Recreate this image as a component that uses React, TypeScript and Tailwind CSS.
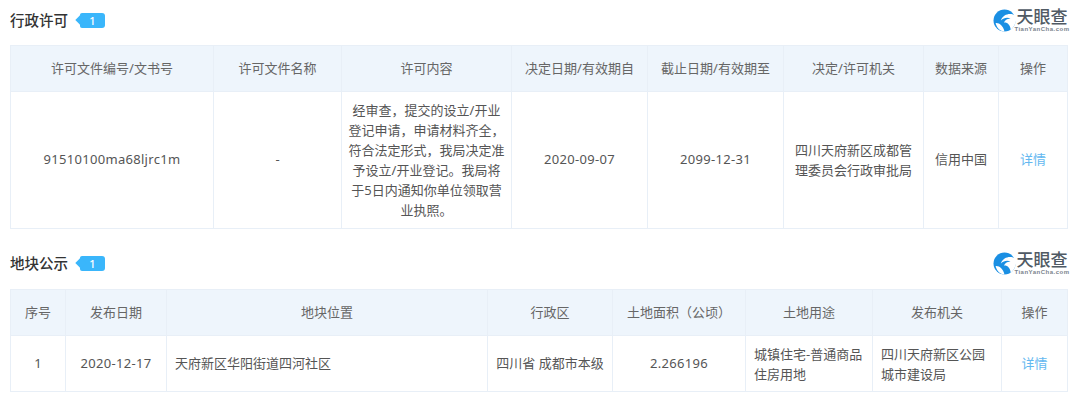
const FONT = "font-['Noto_Sans','Noto_Sans_CJK_SC',sans-serif]";

const Logo = () => (
  <div className="flex items-center">
    <svg width="23" height="23" viewBox="0 0 22 22" className="mr-[1px]">
      <circle cx="11" cy="11" r="10.5" fill="#1a8fe3" />
      <path d="M22 6.5C17 3.5 10 4.5 7.5 11c3-3 7-3.5 9.500-1.500-3-.5-5.500 1-6.500 3.500 3-.5 6 2 6.500 7 3.500-3 6-8.500 5-13.500z" fill="#fff" />
      <path d="M2.500 13.500c3.500-.5 7 2.500 8.500 8-4.500 0-7.500-3.500-8.500-8z" fill="#fff" />
    </svg>
    <div className="flex flex-col items-center w-[50px]">
      <span className="text-[17px] leading-[18px] text-[#505a64] font-medium whitespace-nowrap">天眼查</span>
      <span className="text-[6px] leading-[6px] text-[#7a838c] tracking-[0.5px] font-['Liberation_Sans',sans-serif] font-bold whitespace-nowrap">TianYanCha.com</span>
    </div>
  </div>
);

const SectionHead = ({ title, logoClass }: { title: string; logoClass: string }) => (
  <div className={`flex items-center justify-between pl-[10px] pr-[13px] ${logoClass}`}>
    <div className="flex items-center">
      <h2 className="text-[14.5px] leading-5 font-medium text-[#333]">{title}</h2>
      <div className="relative ml-[12px] w-[25px] h-[15px] rounded-r-[3px] rounded-l-[2px] bg-[#3ab6fb] text-white text-[11px] font-medium leading-[15px] text-center">
        <span className="absolute -left-[3px] top-[3.500px] w-2 h-2 rotate-45 bg-[#3ab6fb]" />
        <span className="relative">1</span>
      </div>
    </div>
    <Logo />
  </div>
);

const th = "border border-[#e8eff7] bg-[#eef5fc] font-normal text-[13px] text-[#666] text-center p-0";
const td = "border border-[#e8eff7] text-[13px] text-center align-middle p-0";
const cell = `${td} text-[#555]`;
const num = `${cell} tracking-[0.3px]`;
const link = `${td} text-[#63b8f0]`;

export default function App() {
  return (
    <div className={`w-[1080px] h-[415px] bg-white overflow-hidden ${FONT}`}>
      <SectionHead title="行政许可" logoClass="h-[45px] pb-[5px]" />
      <div className="pl-[10px] pr-[13px]">
        <table className="w-[1057px] table-fixed border-collapse">
          <colgroup>
            <col className="w-[203px]" />
            <col className="w-[128px]" />
            <col className="w-[170px]" />
            <col className="w-[136px]" />
            <col className="w-[136px]" />
            <col className="w-[140px]" />
            <col className="w-[75px]" />
            <col className="w-[69px]" />
          </colgroup>
          <thead>
            <tr className="h-[46px]">
              <th className={th}>许可文件编号/文书号</th>
              <th className={th}>许可文件名称</th>
              <th className={th}>许可内容</th>
              <th className={th}>决定日期/有效期自</th>
              <th className={th}>截止日期/有效期至</th>
              <th className={th}>决定/许可机关</th>
              <th className={th}>数据来源</th>
              <th className={th}>操作</th>
            </tr>
          </thead>
          <tbody>
            <tr className="h-[137px]">
              <td className={num}>91510100ma68ljrc1m</td>
              <td className={cell}>-</td>
              <td className={`${cell} leading-5 px-[6px]`}>
                经审查，提交的设立/开业登记申请，申请材料齐全，符合法定形式，我局决定准予设立/开业登记。我局将于5日内通知你单位领取营业执照。
              </td>
              <td className={num}>2020-09-07</td>
              <td className={num}>2099-12-31</td>
              <td className={`${cell} leading-5 px-[10px]`}>四川天府新区成都管理委员会行政审批局</td>
              <td className={cell}>信用中国</td>
              <td className={link}>详情</td>
            </tr>
          </tbody>
        </table>
      </div>
      <SectionHead title="地块公示" logoClass="h-[60px] pt-[8px]" />
      <div className="pl-[10px] pr-[13px]">
        <table className="w-[1057px] table-fixed border-collapse">
          <colgroup>
            <col className="w-[55px]" />
            <col className="w-[101px]" />
            <col className="w-[321px]" />
            <col className="w-[125px]" />
            <col className="w-[133px]" />
            <col className="w-[127px]" />
            <col className="w-[129px]" />
            <col className="w-[66px]" />
          </colgroup>
          <thead>
            <tr className="h-[46px]">
              <th className={th}>序号</th>
              <th className={th}>发布日期</th>
              <th className={th}>地块位置</th>
              <th className={th}>行政区</th>
              <th className={th}>土地面积（公顷）</th>
              <th className={th}>土地用途</th>
              <th className={th}>发布机关</th>
              <th className={th}>操作</th>
            </tr>
          </thead>
          <tbody>
            <tr className="h-[56px]">
              <td className={cell}>1</td>
              <td className={num}>2020-12-17</td>
              <td className={`${cell} text-left pl-2`}>天府新区华阳街道四河社区</td>
              <td className={cell}>四川省 成都市本级</td>
              <td className={num}>2.266196</td>
              <td className={`${cell} text-left leading-5 px-2`}>城镇住宅-普通商品住房用地</td>
              <td className={`${cell} text-left leading-5 pl-2 pr-[14px]`}>四川天府新区公园城市建设局</td>
              <td className={link}>详情</td>
            </tr>
          </tbody>
        </table>
      </div>
    </div>
  );
}
